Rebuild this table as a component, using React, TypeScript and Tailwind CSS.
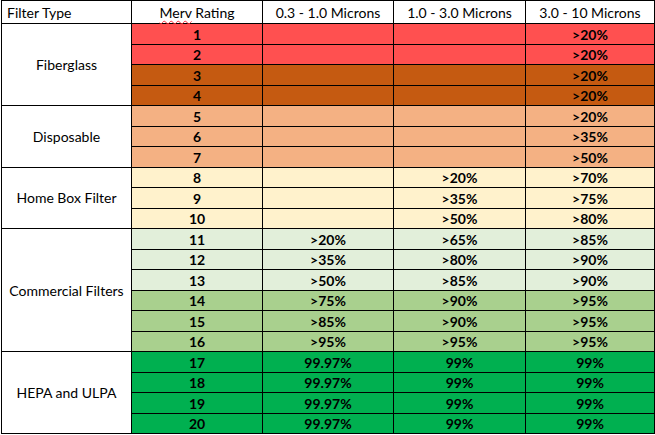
type Row = { merv: number; a: string; b: string; c: string; bg: string };

const groups: { name: string; rows: Row[] }[] = [
  {
    name: "Fiberglass",
    rows: [
      { merv: 1, a: "", b: "", c: ">20%", bg: "bg-[#ff5050]" },
      { merv: 2, a: "", b: "", c: ">20%", bg: "bg-[#ff5050]" },
      { merv: 3, a: "", b: "", c: ">20%", bg: "bg-[#c55a11]" },
      { merv: 4, a: "", b: "", c: ">20%", bg: "bg-[#c55a11]" },
    ],
  },
  {
    name: "Disposable",
    rows: [
      { merv: 5, a: "", b: "", c: ">20%", bg: "bg-[#f4b183]" },
      { merv: 6, a: "", b: "", c: ">35%", bg: "bg-[#f4b183]" },
      { merv: 7, a: "", b: "", c: ">50%", bg: "bg-[#f4b183]" },
    ],
  },
  {
    name: "Home Box Filter",
    rows: [
      { merv: 8, a: "", b: ">20%", c: ">70%", bg: "bg-[#fff2cc]" },
      { merv: 9, a: "", b: ">35%", c: ">75%", bg: "bg-[#fff2cc]" },
      { merv: 10, a: "", b: ">50%", c: ">80%", bg: "bg-[#fff2cc]" },
    ],
  },
  {
    name: "Commercial Filters",
    rows: [
      { merv: 11, a: ">20%", b: ">65%", c: ">85%", bg: "bg-[#e2efda]" },
      { merv: 12, a: ">35%", b: ">80%", c: ">90%", bg: "bg-[#e2efda]" },
      { merv: 13, a: ">50%", b: ">85%", c: ">90%", bg: "bg-[#e2efda]" },
      { merv: 14, a: ">75%", b: ">90%", c: ">95%", bg: "bg-[#a9d08e]" },
      { merv: 15, a: ">85%", b: ">90%", c: ">95%", bg: "bg-[#a9d08e]" },
      { merv: 16, a: ">95%", b: ">95%", c: ">95%", bg: "bg-[#a9d08e]" },
    ],
  },
  {
    name: "HEPA and ULPA",
    rows: [
      { merv: 17, a: "99.97%", b: "99%", c: "99%", bg: "bg-[#00b050]" },
      { merv: 18, a: "99.97%", b: "99%", c: "99%", bg: "bg-[#00b050]" },
      { merv: 19, a: "99.97%", b: "99%", c: "99%", bg: "bg-[#00b050]" },
      { merv: 20, a: "99.97%", b: "99%", c: "99%", bg: "bg-[#00b050]" },
    ],
  },
];

const cell = "border border-black p-0 text-center align-middle";

const App = () => {
  return (
    <div className="w-[655px] h-[435px] bg-white overflow-hidden text-black font-['Lato',sans-serif] text-[14px]">
      <table className="ml-px border-collapse table-fixed w-[653px]">
        <colgroup>
          <col className="w-[130px]" />
          <col className="w-[131px]" />
          <col className="w-[131px]" />
          <col className="w-[132px]" />
          <col className="w-[129px]" />
        </colgroup>
        <thead>
          <tr className="h-[21px]">
            <th className={`${cell} text-left font-normal pl-[5px] pt-px`}>Filter Type</th>
            <th className={`${cell} font-normal pt-px`}>
              <span className="underline decoration-wavy decoration-red-500 decoration-1 underline-offset-2">
                Merv
              </span>{" "}
              Rating
            </th>
            <th className={`${cell} font-normal pt-px`}>0.3 - 1.0 Microns</th>
            <th className={`${cell} font-normal pt-px`}>1.0 - 3.0 Microns</th>
            <th className={`${cell} font-normal pt-px`}>3.0 - 10 Microns</th>
          </tr>
        </thead>
        <tbody>
          {groups.map((group) =>
            group.rows.map((row, i) => (
              <tr key={row.merv} className="h-[20.5px] leading-none">
                {i === 0 && (
                  <td className={`${cell} pt-px`} rowSpan={group.rows.length}>
                    {group.name}
                  </td>
                )}
                <td className={`${cell} ${row.bg} font-bold pt-[2px]`}>{row.merv}</td>
                <td className={`${cell} ${row.bg} font-bold pt-[2px]`}>{row.a}</td>
                <td className={`${cell} ${row.bg} font-bold pt-[2px]`}>{row.b}</td>
                <td className={`${cell} ${row.bg} font-bold pt-[2px]`}>{row.c}</td>
              </tr>
            ))
          )}
        </tbody>
      </table>
    </div>
  );
};

export default App;
